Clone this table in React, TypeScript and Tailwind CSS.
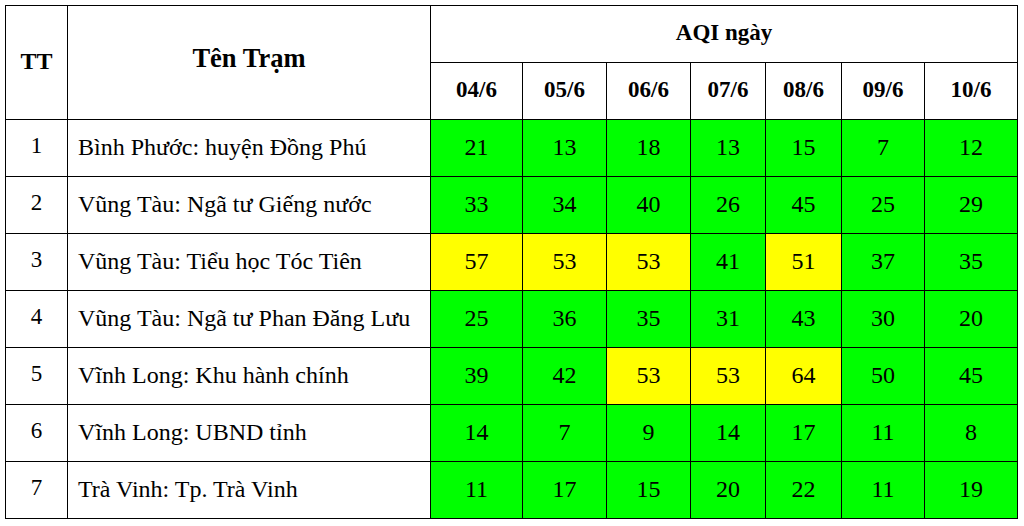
const days = ['04/6', '05/6', '06/6', '07/6', '08/6', '09/6', '10/6']

const rows: { name: string; aqi: number[] }[] = [
  { name: 'Bình Phước: huyện Đồng Phú', aqi: [21, 13, 18, 13, 15, 7, 12] },
  { name: 'Vũng Tàu: Ngã tư Giếng nước', aqi: [33, 34, 40, 26, 45, 25, 29] },
  { name: 'Vũng Tàu: Tiểu học Tóc Tiên', aqi: [57, 53, 53, 41, 51, 37, 35] },
  { name: 'Vũng Tàu: Ngã tư Phan Đăng Lưu', aqi: [25, 36, 35, 31, 43, 30, 20] },
  { name: 'Vĩnh Long: Khu hành chính', aqi: [39, 42, 53, 53, 64, 50, 45] },
  { name: 'Vĩnh Long: UBND tỉnh', aqi: [14, 7, 9, 14, 17, 11, 8] },
  { name: 'Trà Vinh: Tp. Trà Vinh', aqi: [11, 17, 15, 20, 22, 11, 19] },
]

export default function App() {
  return (
    <div className="min-h-[526px] bg-white p-[5px] text-black font-['Liberation_Serif','Times_New_Roman',serif]">
      <table className="table-fixed border-collapse w-[1013px]">
        <colgroup>
          <col className="w-[62px]" />
          <col className="w-[363px]" />
          <col className="w-[92px]" />
          <col className="w-[84px]" />
          <col className="w-[84px]" />
          <col className="w-[75px]" />
          <col className="w-[76px]" />
          <col className="w-[83px]" />
          <col className="w-[93px]" />
        </colgroup>
        <thead>
          <tr className="h-[57px]">
            <th rowSpan={2} className="border border-black text-[24px] font-bold text-center align-middle pb-[3px]">
              TT
            </th>
            <th rowSpan={2} className="border border-black text-[26.5px] font-bold text-center align-middle pb-[8px]">
              Tên Trạm
            </th>
            <th colSpan={7} className="border border-black text-[23px] font-bold text-center align-middle pb-[2px]">
              AQI ngày
            </th>
          </tr>
          <tr className="h-[57px]">
            {days.map((d) => (
              <th key={d} className="border border-black text-[23px] font-bold text-center align-middle pb-[2px]">
                {d}
              </th>
            ))}
          </tr>
        </thead>
        <tbody>
          {rows.map((r, i) => (
            <tr key={r.name} className="h-[57px]">
              <td className="border border-black text-[23px] text-center align-middle pb-[3px]">{i + 1}</td>
              <td className="border border-black text-[24px] text-left align-middle pl-[10px] pb-[3px] whitespace-nowrap">
                {r.name}
              </td>
              {r.aqi.map((v, j) => (
                <td
                  key={j}
                  className={
                    'border border-black text-[24px] text-center align-middle pb-[3px] ' +
                    (v > 50 ? 'bg-[#ffff00]' : 'bg-[#00ff00]')
                  }
                >
                  {v}
                </td>
              ))}
            </tr>
          ))}
        </tbody>
      </table>
    </div>
  )
}
